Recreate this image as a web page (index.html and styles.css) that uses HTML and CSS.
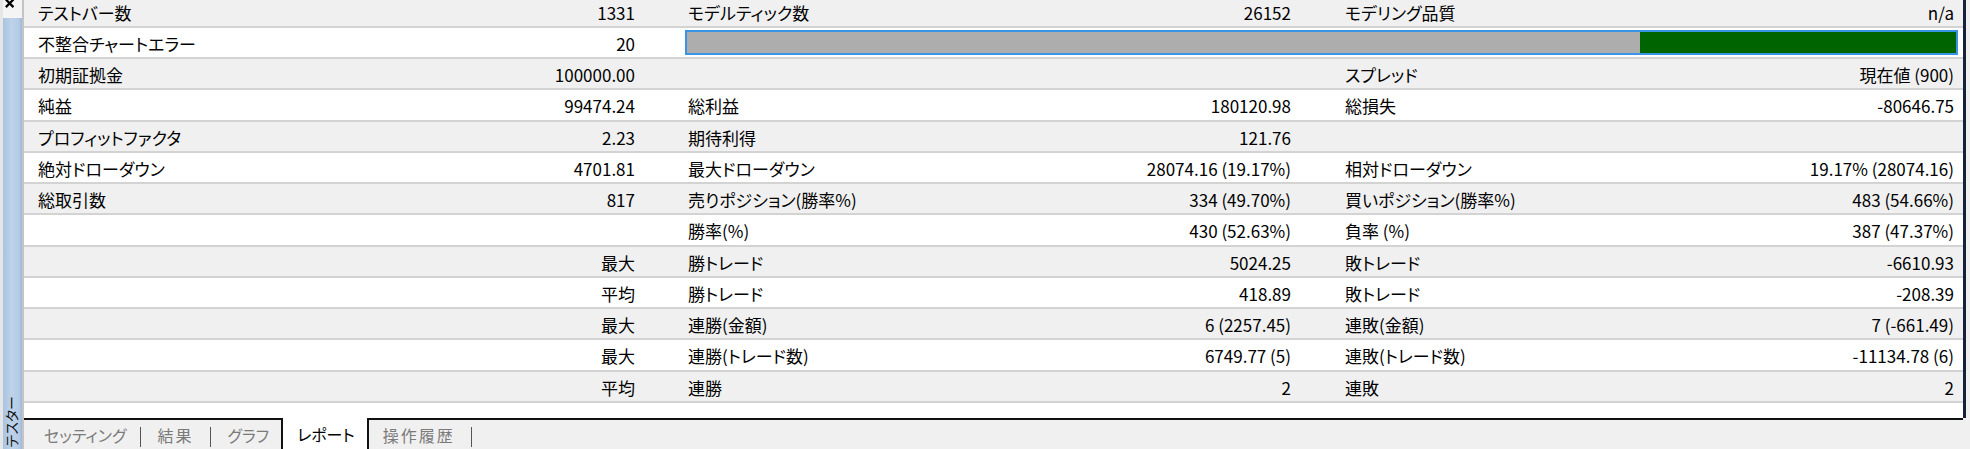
FILE: index.html
```html
<!DOCTYPE html>
<html lang="ja">
<head>
<meta charset="utf-8">
<link rel="stylesheet" href="styles.css">
<title>テスター レポート</title>
</head>
<body>
<div class="window">
  <aside class="sidebar">
    <div class="ticks"></div>
    <div class="dock">
      <svg class="close" width="20" height="18" viewBox="0 0 20 18"><path d="M3 -1 L11 7 M11 -1 L3 7" stroke="#000" stroke-width="2.4" fill="none"/></svg>
      <div class="dockbar"><span class="dock-title">テスター</span></div>
    </div>
  </aside>
  <main class="panel">
    <section class="report">
      <div class="row">
        <div class="cell c1"><span>テストバー数</span><span>1331</span></div>
        <div class="cell c2"><span>モデルティック数</span><span>26152</span></div>
        <div class="cell c3"><span>モデリング品質</span><span>n/a</span></div>
      </div>
      <div class="row">
        <div class="cell c1"><span>不整合チャートエラー</span><span>20</span></div>
        <div class="barcell"><div class="bar"><div class="bar-fill" style="width:24.9%"></div></div></div>
      </div>
      <div class="row">
        <div class="cell c1"><span>初期証拠金</span><span>100000.00</span></div>
        <div class="cell c2"><span></span><span></span></div>
        <div class="cell c3"><span>スプレッド</span><span>現在値 (900)</span></div>
      </div>
      <div class="row">
        <div class="cell c1"><span>純益</span><span>99474.24</span></div>
        <div class="cell c2"><span>総利益</span><span>180120.98</span></div>
        <div class="cell c3"><span>総損失</span><span>-80646.75</span></div>
      </div>
      <div class="row">
        <div class="cell c1"><span>プロフィットファクタ</span><span>2.23</span></div>
        <div class="cell c2"><span>期待利得</span><span>121.76</span></div>
        <div class="cell c3"><span></span><span></span></div>
      </div>
      <div class="row">
        <div class="cell c1"><span>絶対ドローダウン</span><span>4701.81</span></div>
        <div class="cell c2"><span>最大ドローダウン</span><span>28074.16 (19.17%)</span></div>
        <div class="cell c3"><span>相対ドローダウン</span><span>19.17% (28074.16)</span></div>
      </div>
      <div class="row">
        <div class="cell c1"><span>総取引数</span><span>817</span></div>
        <div class="cell c2"><span>売りポジション(勝率%)</span><span>334 (49.70%)</span></div>
        <div class="cell c3"><span>買いポジション(勝率%)</span><span>483 (54.66%)</span></div>
      </div>
      <div class="row">
        <div class="cell c1"><span></span><span></span></div>
        <div class="cell c2"><span>勝率(%)</span><span>430 (52.63%)</span></div>
        <div class="cell c3"><span>負率 (%)</span><span>387 (47.37%)</span></div>
      </div>
      <div class="row">
        <div class="cell c1"><span></span><span>最大</span></div>
        <div class="cell c2"><span>勝トレード</span><span>5024.25</span></div>
        <div class="cell c3"><span>敗トレード</span><span>-6610.93</span></div>
      </div>
      <div class="row">
        <div class="cell c1"><span></span><span>平均</span></div>
        <div class="cell c2"><span>勝トレード</span><span>418.89</span></div>
        <div class="cell c3"><span>敗トレード</span><span>-208.39</span></div>
      </div>
      <div class="row">
        <div class="cell c1"><span></span><span>最大</span></div>
        <div class="cell c2"><span>連勝(金額)</span><span>6 (2257.45)</span></div>
        <div class="cell c3"><span>連敗(金額)</span><span>7 (-661.49)</span></div>
      </div>
      <div class="row">
        <div class="cell c1"><span></span><span>最大</span></div>
        <div class="cell c2"><span>連勝(トレード数)</span><span>6749.77 (5)</span></div>
        <div class="cell c3"><span>連敗(トレード数)</span><span>-11134.78 (6)</span></div>
      </div>
      <div class="row">
        <div class="cell c1"><span></span><span>平均</span></div>
        <div class="cell c2"><span>連勝</span><span>2</span></div>
        <div class="cell c3"><span>連敗</span><span>2</span></div>
      </div>
      <div class="row last"></div>
    </section>
    <nav class="tabs">
      <span class="tab t-setting">セッティング</span><span class="sep"></span>
      <span class="tab t-result">結果</span><span class="sep"></span>
      <span class="tab t-graph">グラフ</span>
      <span class="tab active">レポート</span>
      <span class="tab t-history">操作履歴</span><span class="sep"></span>
    </nav>
  </main>
  <div class="edge"></div>
</div>
</body>
</html>
```
FILE: styles.css
```css
* { box-sizing: border-box; }
html, body {
  margin: 0;
  padding: 0;
  background: #f0f0f0;
}
body {
  font-family: "Noto Sans CJK JP", "Noto Sans", sans-serif;
  font-size: 17px;
  font-feature-settings: "palt";
  color: #000;
  overflow: hidden;
}
.window {
  display: flex;
  width: 1970px;
  height: 449px;
  overflow: hidden;
}
.sidebar {
  width: 22px;
  display: flex;
  background: #eeeeee;
}
.ticks {
  width: 3px;
  background: #e6e6e6;
}
.dock {
  width: 19px;
  display: flex;
  flex-direction: column;
}
.close {
  display: block;
  height: 18px;
  width: 19px;
  background: #f4f4f4;
}
.dockbar {
  flex: 1;
  display: flex;
  flex-direction: column;
  justify-content: flex-end;
  align-items: center;
  background: linear-gradient(to right, #a9c3e0, #bed3ea 45%, #b4cae4 85%, #9db7d6);
}
.dock-title {
  writing-mode: vertical-rl;
  text-orientation: sideways;
  transform: rotate(180deg);
  font-size: 14px;
  line-height: 17px;
  color: #111;
  margin-bottom: 2px;
  margin-right: 2px;
}
.panel {
  width: 1941px;
  display: flex;
  flex-direction: column;
  border-left: 2px solid #c4c4c4;
}
.report {
  height: 418px;
  overflow: hidden;
}
.row {
  display: grid;
  grid-template-columns: 651px 657px 631px;
  height: 31.25px;
  border-bottom: 2px solid #d3d3d3;
  background: #f0f0f0;
}
.row:first-child {
  margin-top: -3.5px;
}
.row:nth-child(even) {
  background: #ffffff;
}
.row.last {
  height: 40px;
  border-bottom: 0;
}
.cell {
  display: flex;
  justify-content: space-between;
  align-items: center;
  padding-left: 13px;
  padding-top: 2px;
  white-space: nowrap;
}
.c1 { padding-left: 14px; padding-right: 40px; }
.c2 { padding-right: 41px; }
.c3 { padding-right: 9px; }
.barcell {
  grid-column: 2 / 4;
  display: flex;
  align-items: center;
  padding: 0 5px 0 10px;
}
.bar {
  flex: 1;
  height: 25px;
  display: flex;
  justify-content: flex-end;
  border: 2px solid #3b93e6;
  background: #adadad;
}
.bar-fill {
  height: 100%;
  background: #006400;
}
.tabs {
  height: 31px;
  display: flex;
  align-items: stretch;
  border-top: 2px solid #111;
  background: #f0f0f0;
  padding-left: 4px;
  font-size: 16px;
}
.tab {
  display: flex;
  align-items: center;
  padding: 1px 16px 0;
  color: #7a7a7a;
  white-space: nowrap;
}
.t-setting { padding-right: 14px; }
.t-result { letter-spacing: 2px; padding-right: 17px; }
.t-graph { padding-right: 12px; }
.t-history { padding-left: 14px; padding-right: 16px; letter-spacing: 2px; }
.tab.active {
  margin-top: -2px;
  padding: 1px 12px 0 14px;
  background: #ffffff;
  color: #000;
  border-left: 2px solid #111;
  border-right: 2px solid #111;
}
.sep {
  width: 1px;
  margin: 7px 0 2px;
  background: #555;
}
.edge {
  width: 3px;
  height: 418px;
  background: #17213a;
}
```
